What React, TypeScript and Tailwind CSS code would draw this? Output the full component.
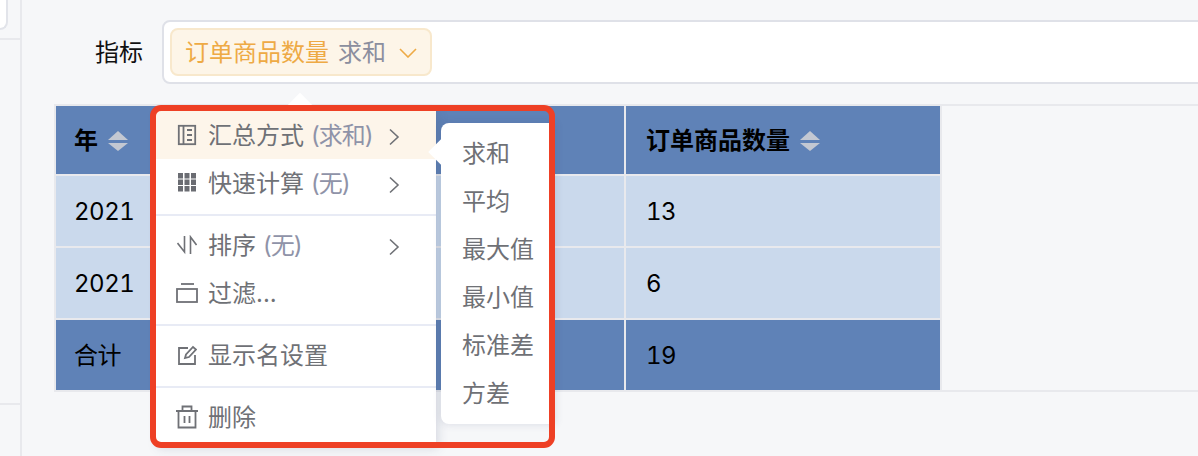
import type { ReactNode } from "react";

const SortIcon = () => (
  <svg width="20" height="20" viewBox="0 0 20 20" className="shrink-0">
    <path d="M10 0 L20 9 H0 Z" fill="#c3c8d2" />
    <path d="M0 12 H20 L10 20 Z" fill="#c3c8d2" />
  </svg>
);

const Chevron = () => (
  <svg width="12" height="18" viewBox="0 0 12 18" fill="none" stroke="#6f7176" strokeWidth="1.6">
    <path d="M2 1.5 L10 9 L2 16.5" />
  </svg>
);

const icons: Record<string, ReactNode> = {
  book: (
    <svg width="20" height="22" viewBox="0 0 20 22" fill="none" stroke="#6f7176" strokeWidth="1.8">
      <rect x="1.8" y="1.8" width="16.4" height="18.4" />
      <path d="M6.5 2 V20 M10 6 H15 M10 11 H15 M10 16 H15" />
    </svg>
  ),
  grid: (
    <svg width="20" height="20" viewBox="0 0 20 20" fill="#6a6c72">
      <rect x="1" y="0" width="5" height="5.5" />
      <rect x="7.5" y="0" width="5" height="5.5" />
      <rect x="14" y="0" width="5" height="5.5" />
      <rect x="1" y="6.5" width="5" height="5.5" />
      <rect x="7.5" y="6.5" width="5" height="5.5" />
      <rect x="14" y="6.5" width="5" height="5.5" />
      <rect x="1" y="13" width="5" height="5.5" />
      <rect x="7.5" y="13" width="5" height="5.5" />
      <rect x="14" y="13" width="5" height="5.5" />
    </svg>
  ),
  sort: (
    <svg width="20" height="20" viewBox="0 0 20 20" fill="none" stroke="#6f7176" strokeWidth="1.6">
      <path d="M0.5 8 L7.5 17 V1 M13.5 19 V2 L19.5 10" />
    </svg>
  ),
  filter: (
    <svg width="22" height="20" viewBox="0 0 22 20" fill="none" stroke="#6f7176" strokeWidth="1.8">
      <path d="M5 1 H18" />
      <rect x="1" y="6" width="20" height="13" />
    </svg>
  ),
  edit: (
    <svg width="20" height="20" viewBox="0 0 20 20" fill="none" stroke="#6f7176" strokeWidth="1.8">
      <path d="M11 3 H2 V19 H18 V10" />
      <path d="M8 13 L9 9.5 L16 2 L19 4.5 L12 12 Z" />
    </svg>
  ),
  trash: (
    <svg width="22" height="24" viewBox="0 0 22 24" fill="none" stroke="#6f7176" strokeWidth="1.8">
      <path d="M0 6 H22 M6.5 6 V1.5 H15.5 V6" />
      <path d="M2.5 6 V22.5 H19.5 V6" />
      <path d="M8.5 11 V18 M13.5 11 V18" />
    </svg>
  ),
};

const MenuItem = ({ icon, label, note, arrow, active }: { icon: string; label: string; note?: string; arrow?: boolean; active?: boolean }) => (
  <div className={`flex h-12 items-center pl-5 pr-9 text-[#6f7176] ${active ? "bg-[#fdf5ea]" : ""}`}>
    <span className="flex w-[22px] justify-center">{icons[icon]}</span>
    <span className="ml-[10px] pt-0.5">{label}</span>
    {note && <span className="ml-[7px] pt-0.5 tracking-[-1px] text-[#8f93a8]">{note}</span>}
    {arrow && (
      <span className="ml-auto pt-1">
        <Chevron />
      </span>
    )}
  </div>
);

const Divider = () => <div className="mt-[7px] mb-[5px] h-0.5 bg-[#e8ebf5]" />;

const submenu = ["求和", "平均", "最大值", "最小值", "标准差", "方差"];

const headCell = "flex items-center bg-[#5f82b7] pt-px font-bold text-black";
const bodyCell = "flex items-center bg-[#cad9ec] pt-[2px] text-black tabular-nums tracking-[-0.5px]";
const totalCell = "flex items-center bg-[#5f82b7] pt-[2px] text-black tabular-nums tracking-[-0.5px]";

export default function App() {
  return (
    <div
      className="relative flex h-[456px] w-[1198px] overflow-hidden bg-[#f6f7f9] text-[24px] leading-none"
      style={{ fontFamily: '"Inter", "Noto Sans CJK SC", sans-serif' }}
    >
      {/* sidebar */}
      <div className="flex w-[22px] shrink-0 flex-col border-r-2 border-[#e8e9ed]">
        <div className="h-[30px] w-2 rounded-br-lg border-r-2 border-b-2 border-[#e2e4ea] bg-white" />
        <div className="mt-2 h-0.5 bg-[#e8e9ed]" />
        <div className="mt-[363px] h-0.5 bg-[#e8e9ed]" />
      </div>

      <div className="flex min-w-0 flex-1 flex-col">
        {/* field row */}
        <div className="mt-5 ml-[73px] flex items-center">
          <span className="w-12 shrink-0 pt-0.5 text-[#111]">指标</span>
          <div className="ml-[19px] -mr-3 flex h-16 flex-1 items-center rounded-lg border-2 border-[#dfe1e8] bg-white pl-[6px]">
            <div className="flex h-12 w-[262px] items-center rounded-lg border-2 border-[#f8e8cc] bg-[#fdf5e8] pl-[13px]">
              <span className="pt-0.5 text-[#eeaa45]">订单商品数量</span>
              <span className="ml-[9px] pt-0.5 text-[#8b8e9e]">求和</span>
              <svg width="18" height="10" viewBox="0 0 18 10" fill="none" stroke="#eeaa45" strokeWidth="1.6" className="ml-[13px] mt-0.5">
                <path d="M1 1 L9 9 L17 1" />
              </svg>
            </div>
          </div>
        </div>

        {/* table */}
        <div className="mt-5 ml-8 border-y-2 border-[#e8e9ed]">
          <div className="grid w-[888px] grid-cols-[180px_386px_314px] grid-rows-[68px_70px_70px_70px] gap-0.5 border-x-2 border-[#e8e9ed] bg-[#e8e9ed]">
            <div className={`${headCell} gap-[10px] pl-[18px]`}>
              年 <SortIcon />
            </div>
            <div className={headCell} />
            <div className={`${headCell} gap-[10px] pl-5`}>
              订单商品数量 <SortIcon />
            </div>
            <div className={`${bodyCell} pl-[18px]`}>2021</div>
            <div className={bodyCell} />
            <div className={`${bodyCell} pl-5`}>13</div>
            <div className={`${bodyCell} pl-[18px]`}>2021</div>
            <div className={bodyCell} />
            <div className={`${bodyCell} pl-5`}>6</div>
            <div className={`${totalCell} pl-[18px]`}>合计</div>
            <div className={totalCell} />
            <div className={`${totalCell} pl-5`}>19</div>
          </div>
        </div>
      </div>

      {/* popover caret */}
      <div className="absolute top-[97px] left-[290px] size-5 rotate-45 bg-white" />

      {/* context menu */}
      <div className="absolute top-[111px] left-[156px] h-[335px] w-[280px] bg-white shadow-[2px_2px_10px_rgba(60,70,110,0.18)]">
        <MenuItem icon="book" label="汇总方式" note="(求和)" arrow active />
        <MenuItem icon="grid" label="快速计算" note="(无)" arrow />
        <Divider />
        <MenuItem icon="sort" label="排序" note="(无)" arrow />
        <MenuItem icon="filter" label="过滤..." />
        <Divider />
        <MenuItem icon="edit" label="显示名设置" />
        <Divider />
        <MenuItem icon="trash" label="删除" />
      </div>

      {/* submenu */}
      <div className="absolute top-[123px] left-[441px] h-[301px] w-[114px] rounded-l-lg bg-white py-[6px] pl-[21px] text-[#6f7176] shadow-[0_0_8px_rgba(60,70,110,0.16)]">
        <div className="absolute top-[20px] -left-[9px] size-[18px] rotate-45 bg-white" />
        {submenu.map((s) => (
          <div key={s} className="relative flex h-12 items-center pt-0.5">
            {s}
          </div>
        ))}
      </div>

      {/* annotation frame */}
      <div className="absolute top-[105px] left-[150px] h-[343px] w-[405px] rounded-[11px] border-[6px] border-[#ee4025]" />
    </div>
  );
}
